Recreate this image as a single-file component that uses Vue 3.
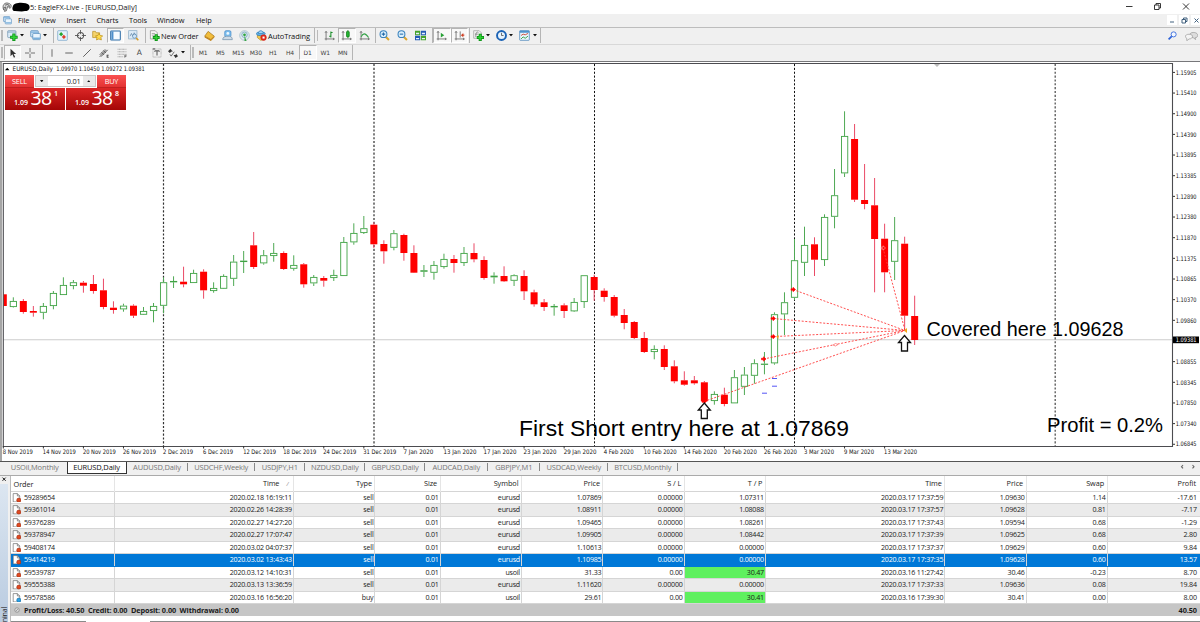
<template>
  <div class="terminal">
    <svg class="sprite">
      <symbol id="caret" viewBox="0 0 6 4"><path d="M0 0h6L3 4z" fill="#111" /></symbol>
      <symbol id="newchart" viewBox="0 0 16 16">
        <rect x="1" y="1" width="12" height="10" rx="1" fill="#dcecf8" stroke="#6c90ad" />
        <path d="M1 3h12" stroke="#6c90ad" />
        <path d="M10 5v11M4.500 10.500h11" stroke="#0a8f14" stroke-width="4.500" />
        <path d="M10 6v9M5.500 10.500h9" stroke="#2fd336" stroke-width="2.400" />
      </symbol>
      <symbol id="indicators" viewBox="0 0 16 16">
        <path d="M1 1h8l3 3v8H1z" fill="#f1f1f1" stroke="#999" /><path d="M4 10c0-9 3-7 4-6M3 6h4" fill="none" stroke="#666" />
        <path d="M10.500 5.500V16M5.500 11h10.500" stroke="#0a8f14" stroke-width="4.500" />
        <path d="M10.500 6.500V15M6.500 11h8.500" stroke="#2fd336" stroke-width="2.200" />
      </symbol>
      <symbol id="profiles" viewBox="0 0 16 16">
        <rect x="1" y="1" width="11" height="9" rx="1" fill="#d5e8f8" stroke="#4583b8" />
        <rect x="4" y="5" width="11" height="9" rx="1" fill="#eaf5fd" stroke="#4583b8" />
        <path d="M1.500 3h10M4.500 12h10" stroke="#7ab0dc" stroke-width="2" />
      </symbol>
      <symbol id="market" viewBox="0 0 16 16">
        <rect x="1" y="1" width="14" height="14" rx="1" fill="#e3f1fb" stroke="#6fa0c8" />
        <path d="M3 6l3-3 3 3-3 3z" fill="#26a52e" /><path d="M7 10l3-3 3 3-3 3z" fill="#e0402c" />
      </symbol>
      <symbol id="target" viewBox="0 0 16 16">
        <circle cx="8" cy="8" r="4.500" fill="none" stroke="#555" stroke-width="1.500" />
        <path d="M8 0v6M8 10v6M0 8h6M10 8h6" stroke="#555" stroke-width="1.300" />
      </symbol>
      <symbol id="folder" viewBox="0 0 16 16">
        <path d="M1 2h4l1 2h5v7H1z" fill="#f5d36c" stroke="#b58a1d" />
        <path d="M10 5l2 3 3.500.5-2.500 2.500.6 3.500L10 13l-3.500 1.500.7-3.500L5 8.500 8.500 8z" fill="#ffdb4d" stroke="#b98c10" />
      </symbol>
      <symbol id="window" viewBox="0 0 16 16">
        <rect x="1" y="1.500" width="14" height="13" rx="1" fill="#f6fbff" stroke="#2f6ea8" stroke-width="1.500" />
        <path d="M3.500 2v12" stroke="#4d8ecb" stroke-width="3" />
      </symbol>
      <symbol id="tester" viewBox="0 0 16 16">
        <rect x="1" y="1" width="12" height="12" fill="#dcebf7" stroke="#86a7c2" />
        <path d="M3 9l2-4 2 4 2-5 2 3" fill="none" stroke="#5a7fa0" />
        <circle cx="9.500" cy="9" r="3" fill="#cfe5f7" stroke="#5584ad" /><path d="M12 11.500l3 3.500" stroke="#d69b26" stroke-width="2.200" />
      </symbol>
      <symbol id="neworder" viewBox="0 0 16 16">
        <path d="M2 1h7l3 3v9H2z" fill="#f8f8f8" stroke="#888" /><path d="M4 5h5M4 7.500h5" stroke="#888" />
        <path d="M10.500 6v10M5.500 11h10" stroke="#0a8f14" stroke-width="4.400" />
        <path d="M10.500 7v8M6.500 11h8" stroke="#35cf38" stroke-width="2" />
      </symbol>
      <symbol id="gold" viewBox="0 0 16 16">
        <path d="M6 2l9 7-5 5-9-5z" fill="#f2bd3b" stroke="#a06d0c" /><path d="M1 9v2l9 5 5-5V9l-5 5z" fill="#c07f12" />
      </symbol>
      <symbol id="person" viewBox="0 0 16 16">
        <rect x="4" y="1" width="9" height="9" rx="2" fill="#7fc0f0" stroke="#3d85c4" />
        <circle cx="8.500" cy="5" r="2" fill="#eef8ff" />
        <path d="M1 14c0-4 3-4 5-5h5c2 1 4 1 4 5z" fill="#cfdbe6" stroke="#6f8ea8" />
      </symbol>
      <symbol id="signal" viewBox="0 0 16 16">
        <circle cx="8" cy="8" r="7" fill="#e0ebf0" stroke="#9ab6c5" /><circle cx="8" cy="7" r="4" fill="none" stroke="#6799b8" />
        <circle cx="8" cy="7" r="2" fill="#2fa642" /><path d="M8 8v8h3z" fill="#39a546" />
      </symbol>
      <symbol id="auto" viewBox="0 0 16 16">
        <path d="M2 7h10v6l-5 2-5-4z" fill="#f0c650" stroke="#b48a18" />
        <ellipse cx="7" cy="5.500" rx="6.500" ry="2.800" fill="#66b3e8" stroke="#2b78b3" /><path d="M3.500 5c0-5.500 7-5 7 0z" fill="#a5d9f8" stroke="#2b78b3" />
        <circle cx="11" cy="11" r="4.500" fill="#da281b" /><rect x="9.500" y="9.500" width="3" height="3" fill="#fff" />
      </symbol>
      <symbol id="bars" viewBox="0 0 16 16">
        <path d="M3 2v13M1 13h14M1.500 4L3 2l1.500 2M13 11.500l2 1.500-2 1.500" fill="none" stroke="#666" stroke-width="1.200" />
        <path d="M10 2v9M10 3.500h2.500M7.500 9H10" stroke="#188c28" stroke-width="1.500" />
      </symbol>
      <symbol id="candle" viewBox="0 0 16 16">
        <path d="M3 2v13M1 13h14M1.500 4L3 2l1.500 2M13 11.500l2 1.500-2 1.500" fill="none" stroke="#666" stroke-width="1.200" />
        <path d="M10 0v12" stroke="#08780c" /><rect x="8" y="2" width="4" height="8" rx="1" fill="#22b232" stroke="#08780c" />
      </symbol>
      <symbol id="line" viewBox="0 0 16 16">
        <path d="M3 2v13M1 13h14M1.500 4L3 2l1.500 2M13 11.500l2 1.500-2 1.500" fill="none" stroke="#666" stroke-width="1.200" />
        <path d="M3 10c3-6 6-6 11 1" fill="none" stroke="#35a348" stroke-width="1.500" />
      </symbol>
      <symbol id="zoomin" viewBox="0 0 16 16">
        <path d="M9 9l5.500 5.500" stroke="#dba62d" stroke-width="3" /><circle cx="6.500" cy="6" r="5" fill="#d9effc" stroke="#3982bd" stroke-width="1.500" />
        <path d="M4 6h5M6.500 3.500v5" stroke="#2269a8" stroke-width="1.500" />
      </symbol>
      <symbol id="zoomout" viewBox="0 0 16 16">
        <path d="M9 9l5.500 5.500" stroke="#dba62d" stroke-width="3" /><circle cx="6.500" cy="6" r="5" fill="#d9effc" stroke="#3982bd" stroke-width="1.500" />
        <path d="M4 6h5" stroke="#2269a8" stroke-width="1.500" />
      </symbol>
      <symbol id="tile" viewBox="0 0 16 16">
        <path d="M0 1h7.500v6.500H0zM8.500 8.500H16V15H8.500z" fill="#46a32b" /><path d="M8.500 1H16v6.500H8.500zM0 8.500h7.500V15H0z" fill="#245bb5" />
        <path d="M1.500 4h4.500v2H1.500zM10 4h4.500v2H10zM1.500 11.500h4.500v2H1.500zM10 11.500h4.500v2H10z" fill="#e8f3ff" />
      </symbol>
      <symbol id="scroll" viewBox="0 0 16 16">
        <path d="M3 2v13M1 13h14M1.500 4L3 2l1.500 2M13 11.500l2 1.500-2 1.500" fill="none" stroke="#666" stroke-width="1.200" />
        <path d="M7 4l5 3.500L7 11z" fill="#27a035" />
      </symbol>
      <symbol id="shift" viewBox="0 0 16 16">
        <path d="M3 2v13M1 13h14M1.500 4L3 2l1.500 2M13 11.500l2 1.500-2 1.500M9 2v9" fill="none" stroke="#666" stroke-width="1.200" />
        <path d="M10 7.500l3.500-3v2H15v2h-1.500v2z" fill="#cf4226" />
      </symbol>
      <symbol id="clock" viewBox="0 0 16 16">
        <circle cx="8" cy="8" r="6.500" fill="#e6f3fd" stroke="#1b62b5" stroke-width="2.800" /><path d="M8 4v4h3" fill="none" stroke="#555" stroke-width="1.200" />
      </symbol>
      <symbol id="template" viewBox="0 0 16 16">
        <rect x="1" y="1" width="14" height="14" rx="1" fill="#eaf5fd" stroke="#3b7bb3" /><path d="M1 2.500h14" stroke="#4e92cc" stroke-width="3" />
        <path d="M3 8l3-2 3 1 4-2" fill="none" stroke="#c74230" stroke-width="1.300" /><path d="M3 13l3-3 3 2 4-3" fill="none" stroke="#2a9d3b" stroke-width="1.300" />
      </symbol>
      <symbol id="cursor" viewBox="0 0 16 16"><path d="M4 1v12l3-3 2.500 5.500 2-1L9 9.500h4z" fill="#333" /></symbol>
      <symbol id="cross" viewBox="0 0 16 16"><path d="M8 0v6.500M8 9.500V16M0 8h6.500M9.500 8H16" stroke="#555" stroke-width="1.300" /><path d="M7.500 7.500h1v1h-1z" fill="#555" /></symbol>
      <symbol id="vline" viewBox="0 0 16 16"><path d="M8 2v12" stroke="#444" stroke-width="1.200" /></symbol>
      <symbol id="hline" viewBox="0 0 16 16"><path d="M2 8h12" stroke="#444" stroke-width="1.300" /></symbol>
      <symbol id="trend" viewBox="0 0 16 16"><path d="M2 14L14 2" stroke="#444" stroke-width="1.300" /></symbol>
      <symbol id="channel" viewBox="0 0 16 16">
        <path d="M1 11L10 2M3 14L14 3M1 14L12 3M4 7l4 4M7 4l4 4M13 11v4M12.500 11.500h3M12.500 13h2.500M12.500 15h3" fill="none" stroke="#444" stroke-width="1.200" />
      </symbol>
      <symbol id="fibo" viewBox="0 0 16 16">
        <path d="M1 2h14M1 6h14M1 10h14M1 14h9" stroke="#777" stroke-dasharray="1.500 .7" /><path d="M12.500 15.500v-4h3M12.500 13.500h2.500" fill="none" stroke="#444" />
      </symbol>
      <symbol id="label" viewBox="0 0 16 16">
        <rect x="1.500" y="1.500" width="13" height="13" fill="none" stroke="#777" stroke-dasharray="1 1" />
        <path d="M1 1.500h4M4.500 6V4.500h7V6M8 4.500V12" fill="none" stroke="#444" stroke-width="1.500" />
      </symbol>
      <symbol id="arrows" viewBox="0 0 16 16">
        <path d="M0 5l4-4 2 3 2 1-3 1-2 2zM9 11l3 0 1-2 3 4-4 3z" fill="#333" /><path d="M3 10l2 3 5-7" fill="none" stroke="#444" stroke-width="1.200" />
      </symbol>
      <symbol id="sellorder" viewBox="0 0 16 16">
        <path d="M2 1h7l4 4v10H2z" fill="#fff" stroke="#555" /><path d="M9 1v4h4" fill="none" stroke="#555" /><circle cx="11.500" cy="12" r="3.500" fill="#df4a22" stroke="#9f2b0e" />
      </symbol>
      <symbol id="buyorder" viewBox="0 0 16 16">
        <path d="M2 1h7l4 4v10H2z" fill="#fff" stroke="#555" /><path d="M9 1v4h4" fill="none" stroke="#555" /><circle cx="11.500" cy="12" r="3.500" fill="#2aa0e6" stroke="#15689c" />
      </symbol>
      <symbol id="search" viewBox="0 0 16 16"><path d="M1 15l6-6" stroke="#2c62d9" stroke-width="3" /><circle cx="10" cy="6" r="4.500" fill="#f4f8ff" stroke="#2c62d9" stroke-width="1.500" /></symbol>
      <symbol id="chat" viewBox="0 0 22 16">
        <path d="M14 2c10 0 9 9 3 9l1 3-4-3c-8 0-8-9 0-9z" fill="#ddd" stroke="#888" /><path d="M7 5c8 0 7 8 0 8l-4 3v-4C-1 10 0 5 7 5z" fill="#f4f4f4" stroke="#888" />
      </symbol>
    </svg>

    <header class="title">
      <svg class="logo" viewBox="0 0 16 16">
        <path d="M3 13C-1 5 5 0 10 2c5 1 6 5 3 8l-2-1 1-3-3 1-2 7-3 1 2-7-3 1z" fill="#ddd" stroke="#555" stroke-width="1.300" />
        <path d="M5 5l4-1 2 1" fill="none" stroke="#333" stroke-width="1.200" />
      </svg>
      <svg class="redact" viewBox="0 0 18 10"><path d="M1 4C2 0 14 0 17 3c2 4-1 6-4 6-3 1-7 0-10 0C0 9 0 6 1 4z" fill="#000" /></svg>
      <span class="title-text">5: EagleFX-Live - [EURUSD,Daily]</span>
      <svg class="win-buttons" viewBox="0 0 68 14">
        <path d="M1 6.500h6.500M29.500 5h4.500v4.500h-4.500zM31 5V3.500h4.500V8H34M58 3.500l6 6M64 3.500l-6 6" fill="none" stroke="#222" stroke-width=".9" />
      </svg>
    </header>

    <nav class="menu">
      <svg class="menu-icon"><use href="#profiles" /></svg>
      <span v-for="m in menus" :key="m.text" class="menu-item" :style="{ width: m.w + 'px' }">{{ m.text }}</span>
      <svg class="mdi-buttons" viewBox="0 0 34 12">
        <path d="M0 1h10v10H0zM12 1h10v10H12zM24 1h10v10H24z" fill="#fff" />
        <path d="M3 8h4M15 5.500h3.500V9H15zM16.500 5.500V4H20v3.500h-1.500M27.500 4.500l4 4M31.500 4.500l-4 4" fill="none" stroke="#41617f" stroke-width="1" />
      </svg>
    </nav>

    <div class="toolbar main-bar">
      <div v-for="(t, i) in tools" :key="i" class="tool" :class="t.type" :style="{ width: t.w + 'px' }">
        <svg v-if="t.icon" class="icon"><use :href="'#' + t.icon" /></svg>
        <span v-if="t.text" class="tool-text">{{ t.text }}</span>
        <svg v-if="t.type === 'drop'" class="caret"><use href="#caret" /></svg>
      </div>
      <svg class="search"><use href="#search" /></svg>
      <svg class="chat"><use href="#chat" /></svg>
    </div>

    <div class="toolbar line-bar">
      <div v-for="(t, i) in drawTools" :key="i" class="tool" :class="t.type" :style="{ width: t.w + 'px' }">
        <svg v-if="t.icon" class="icon small"><use :href="'#' + t.icon" /></svg>
        <span v-if="t.text" class="period" :class="{ letter: t.text === 'A' }">{{ t.text }}</span>
        <svg v-if="t.type === 'drop'" class="caret"><use href="#caret" /></svg>
      </div>
    </div>

    <main class="chart">
      <svg class="plot" viewBox="0 61 1200 400">
        <clipPath id="frame"><rect x="3.300" y="63" width="1169" height="383" /></clipPath>
        <rect x="0" y="61" width="1200" height="400" fill="#fff" />
        <path d="M0 61.500H1200" stroke="#77777a" stroke-width="1.200" />
        <path d="M1 61V461" stroke="#808080" stroke-width="1.400" />
        <path d="M3.300 339.700H1172" stroke="#ccc" stroke-width="1.100" />
        <path d="M934 64h6l-3 3z" fill="#bbb" />

        <line v-for="s in separators" :key="s.x" :x1="s.x" :x2="s.x" y1="64" y2="446" :stroke="s.color" :stroke-width="s.w" stroke-dasharray="2.100 1.750" />

        <g clip-path="url(#frame)">
          <g v-for="c in candles" :key="c.x">
            <line :x1="c.x" :x2="c.x" :y1="c.high" :y2="c.top" :stroke="c.wick" />
            <line :x1="c.x" :x2="c.x" :y1="c.bottom" :y2="c.low" :stroke="c.wick" />
            <rect v-if="c.up" :x="c.x - 3.1" :y="c.top + 0.4" width="6.300" :height="Math.max(c.bottom - c.top - 0.8, 0.3)" fill="#fff" stroke="#3fa344" stroke-width=".9" />
            <rect v-else :x="c.x - 3.5" :y="c.top" width="7" :height="c.bottom - c.top" fill="#f00" />
          </g>
        </g>
        <path d="M3.300 446.500V63.500H1172.500V446.500z" fill="none" stroke="#4c4c50" stroke-width="1.100" />

        <g stroke="#ff3b3b" stroke-width=".9" stroke-dasharray="2 1.600">
          <line v-for="d in deals" :key="d.y" :x1="d.x" :y1="d.y" x2="905" y2="330.500" />
        </g>
        <path v-for="d in deals" :key="'m' + d.y" :transform="`translate(${d.x} ${d.y})`" d="M-2-.8h2v-1.400L2.500 0 0 2.200V.8h-2z" :fill="d.hollow ? '#f00' : '#f00'" :stroke="d.hollow ? '#fbb' : '#f00'" stroke-width=".6" />
        <path d="M833 345l2.500-1.500 2.500 1-2.500 1.500z" fill="#fff" stroke="#f66" stroke-width=".7" />
        <path d="M907 328l-3 2.500 3 2.500zM778.500 335v4l-2-2z" fill="#f0a818" />
        <path d="M772 378.500h5M772 386.200h5M762 393.200h5" stroke="#5555f5" stroke-width="1" />
        <path v-for="a in arrows" :key="a.x" :transform="`translate(${a.x} ${a.y})`" d="M0 0l6 7H3v8.500h-6V7h-3z" fill="#fff" stroke="#111" stroke-width="1.300" />

        <g class="note">
          <text x="519" y="436.300" font-size="22.900" textLength="330">First Short entry here at 1.07869</text>
          <text x="926.500" y="336" font-size="19.800" textLength="197">Covered here 1.09628</text>
          <text x="1047" y="431.800" font-size="20.200" textLength="116">Profit = 0.2%</text>
        </g>

        <g class="scale">
          <g v-for="p in prices" :key="p.text">
            <path :d="`M1173 ${p.y}h2`" stroke="#333" />
            <text x="1175.800" :y="p.y + 2.2" textLength="20.700" lengthAdjust="spacingAndGlyphs">{{ p.text }}</text>
          </g>
          <rect x="1173" y="336.500" width="26" height="6.700" fill="#000" />
          <text class="inverse" x="1175.800" y="342" textLength="20.700" lengthAdjust="spacingAndGlyphs">1.09381</text>
          <g v-for="d in dates" :key="d.text">
            <path :d="`M${d.x + 0.5} 446v2.500`" stroke="#333" />
            <text :x="d.x" y="454.300" :textLength="d.len" lengthAdjust="spacingAndGlyphs">{{ d.text }}</text>
          </g>
          <path d="M5 70.200h4.500L7.200 67.700z" fill="#000" />
          <text x="12.500" y="71" textLength="40.500" lengthAdjust="spacingAndGlyphs">EURUSD,Daily</text>
          <text x="56.200" y="71" textLength="88.500" lengthAdjust="spacingAndGlyphs">1.09970 1.10450 1.09272 1.09381</text>
        </g>
      </svg>

      <section class="trade">
        <div class="trade-top">
          <span class="side">SELL</span>
          <div class="volume">
            <i class="spin"><svg class="caret"><use href="#caret" /></svg></i>
            <span class="lots">0.01</span>
            <i class="spin up"><svg class="caret"><use href="#caret" /></svg></i>
          </div>
          <span class="side">BUY</span>
        </div>
        <div class="trade-bottom">
          <div class="quote"><small>1.09</small><b>38</b><sup>1</sup></div>
          <div class="quote"><small>1.09</small><b>38</b><sup>8</sup></div>
        </div>
      </section>
    </main>

    <div class="tabs">
      <span v-for="t in tabs" :key="t.text" class="tab" :class="{ active: t.active, first: t.first }" :style="{ width: t.w + 'px' }">{{ t.text }}</span>
      <svg class="tab-nav" viewBox="0 0 20 10"><path d="M4 3L2.500 4.700 4 6.400M13.500 3L15 4.700l-1.500 1.700" fill="none" stroke="#666" stroke-width="1.100" /></svg>
    </div>

    <section class="history">
      <aside class="side-strip">
        <svg class="close" viewBox="0 0 10 10"><path d="M2.500 2l4 4M6.500 2l-4 4" stroke="#111" stroke-width="1.200" /></svg>
        <div class="strip"><span>Terminal</span></div>
      </aside>
      <div class="table">
        <div class="row head">
          <span v-for="(h, i) in headers" :key="i" class="cell">{{ h }}<em v-if="i === 1">/</em></span>
        </div>
        <div v-for="(r, n) in orders" :key="r[0]" class="row" :class="{ odd: n % 2, selected: n === 5 }">
          <span v-for="(v, i) in r" :key="i" class="cell" :class="{ hit: i === 7 && r[4] === 'usoil' }">
            <svg v-if="i === 0" class="order-icon"><use :href="r[2] === 'buy' ? '#buyorder' : '#sellorder'" /></svg>{{ v }}
          </span>
        </div>
        <div class="total">
          <svg class="dot" viewBox="0 0 8 8"><circle cx="4" cy="4" r="3" fill="#ddd" stroke="#888" /><path d="M2.500 5.500l3-3" stroke="#888" /></svg>
          <span class="balance">Profit/Loss: 40.50&nbsp; Credit: 0.00&nbsp; Deposit: 0.00&nbsp; Withdrawal: 0.00</span>
          <span class="sum">40.50</span>
        </div>
        <div class="bottom-edge"><i class="edge-left"></i><i class="edge-right"></i></div>
      </div>
    </section>
  </div>
</template>

<script setup>
const menus = [
  { text: 'File', w: 22 }, { text: 'View', w: 26.5 }, { text: 'Insert', w: 30 }, { text: 'Charts', w: 32.5 },
  { text: 'Tools', w: 28 }, { text: 'Window', w: 39 }, { text: 'Help', w: 30 }
]

const tools = [
  { type: 'grip', w: 4 },
  { type: 'drop', icon: 'newchart', w: 23 },
  { type: 'drop', icon: 'profiles', w: 23 },
  { type: 'sep', w: 3.5 },
  { icon: 'market', w: 18 },
  { icon: 'target', w: 17.5 },
  { icon: 'folder', w: 17.5 },
  { type: 'pressed', icon: 'window', w: 17.5 },
  { icon: 'tester', w: 18 },
  { type: 'sep', w: 4 },
  { type: 'wide', icon: 'neworder', text: 'New Order', w: 55 },
  { icon: 'gold', w: 17.5 },
  { icon: 'person', w: 17.5 },
  { icon: 'signal', w: 17 },
  { type: 'wide', icon: 'auto', text: 'AutoTrading', w: 61 },
  { type: 'sep', w: 1 },
  { type: 'grip', w: 5 },
  { icon: 'bars', w: 18 },
  { type: 'pressed', icon: 'candle', w: 17.5 },
  { icon: 'line', w: 18 },
  { type: 'sep', w: 2 },
  { icon: 'zoomin', w: 18 },
  { icon: 'zoomout', w: 17.5 },
  { icon: 'tile', w: 18 },
  { type: 'sep', w: 4 },
  { type: 'pressed', icon: 'scroll', w: 17.5 },
  { type: 'pressed', icon: 'shift', w: 17.5 },
  { type: 'sep', w: 2 },
  { type: 'drop first-drop', icon: 'indicators', w: 23 },
  { type: 'drop', icon: 'clock', w: 23.5 },
  { type: 'drop', icon: 'template', w: 22.5 },
  { type: 'sep', w: 2 }
].map(t => (t.type === 'drop first-drop' ? { ...t, type: 'drop' } : t))

const drawTools = [
  { type: 'grip', w: 4 },
  { type: 'pressed', icon: 'cursor', w: 17 },
  { icon: 'cross', w: 18 },
  { type: 'sep', w: 3.5 },
  { icon: 'vline', w: 18 },
  { icon: 'hline', w: 17.5 },
  { icon: 'trend', w: 17.5 },
  { icon: 'channel', w: 17.5 },
  { icon: 'fibo', w: 17.5 },
  { text: 'A', w: 17.5 },
  { icon: 'label', w: 17.5 },
  { type: 'drop', icon: 'arrows', w: 23.5 },
  { type: 'sep', w: 2 },
  { type: 'grip', w: 4 },
  { text: 'M1', w: 16 },
  { text: 'M5', w: 18.5 },
  { text: 'M15', w: 17.5 },
  { text: 'M30', w: 17.5 },
  { text: 'H1', w: 17 },
  { text: 'H4', w: 17 },
  { type: 'pressed', text: 'D1', w: 18 },
  { text: 'W1', w: 17.5 },
  { text: 'MN', w: 17.5 },
  { type: 'sep', w: 1 }
]

const separators = [
  { x: 163.5, color: '#333', w: 1.2 },
  { x: 374, color: '#808080', w: 2 },
  { x: 594.5, color: '#111', w: 1 },
  { x: 794.5, color: '#111', w: 1 },
  { x: 1055.2, color: '#555', w: 1.3 }
]

// [up, high, top, bottom, low]
const raw = [
  [0, 291.7, 294.3, 306, 307.3], [1, 297.3, 301, 307, 307.5], [0, 299, 301, 312, 313.7], [0, 306, 311, 312.7, 316.7],
  [1, 303, 306, 312.7, 319.3], [1, 291, 293, 306, 309.3], [1, 277.3, 285, 295, 295], [1, 280, 282.3, 286, 289.3],
  [0, 281, 282.7, 285.7, 292.7], [0, 275, 284, 291, 293.7], [0, 278.7, 290.3, 307, 309.3], [0, 301.3, 307.7, 310, 313.7],
  [1, 303.7, 305.7, 309.3, 311.7], [0, 304.3, 305.7, 315.7, 318], [1, 307, 311, 314.7, 315], [1, 303, 306, 311, 322.3],
  [1, 277.3, 282.3, 305.7, 313.3], [1, 276.3, 281, 282.3, 288], [0, 266.7, 281.7, 284.3, 287.3], [1, 269.7, 273, 283, 283],
  [0, 269.3, 271.7, 290.3, 298.7], [1, 282.3, 288, 291, 292.7], [1, 274.3, 276, 288.7, 289], [1, 255, 261.7, 278.7, 286],
  [1, 251, 260.7, 262, 273], [0, 232, 245.3, 267, 269], [1, 250, 255.3, 263.3, 264.7], [1, 243, 253, 256, 261.7],
  [0, 251.3, 253, 269, 270], [1, 255.3, 265, 268.7, 270.7], [0, 263, 264.3, 284.3, 287.7], [1, 275, 277, 283.3, 286],
  [0, 276, 278, 280.7, 286.7], [1, 269.7, 275, 278, 281], [1, 237, 242, 276, 276], [1, 223.3, 233, 242.3, 244.7],
  [1, 216, 228.3, 233, 234], [0, 222.3, 224.7, 244.3, 248], [0, 240.3, 244, 251.3, 263.7], [1, 230, 233.3, 247.7, 250.3],
  [0, 233.7, 235, 253, 260.7], [0, 245.3, 253, 272.7, 273], [1, 265, 270.3, 271.7, 277], [1, 261, 265, 272.7, 279.7],
  [1, 253.7, 259, 267, 268.7], [0, 255, 259, 263, 272.7], [1, 247, 253, 263, 266], [0, 243.3, 253, 259.3, 262.3],
  [0, 256.3, 260, 278, 279.7], [1, 272.3, 275.7, 277.3, 283.7], [0, 266.3, 276, 281.3, 282], [1, 274.3, 275.3, 280.7, 286],
  [0, 270.3, 276, 291.3, 300], [0, 289.7, 292.3, 304.3, 306.7], [0, 299, 302.3, 307, 311], [1, 304, 306, 307.3, 315.7],
  [0, 303.3, 305.3, 311, 318], [1, 298, 302, 311.3, 312], [1, 275.3, 275.3, 302, 308], [0, 274.7, 277, 290, 300.7],
  [0, 288.3, 290.7, 297, 301.7], [0, 295, 297, 315.7, 317.3], [0, 309, 315, 323, 329.3], [0, 321, 322, 338, 339],
  [0, 332, 338, 352, 353], [1, 345.3, 349, 352, 359.3], [0, 345.3, 349, 367, 370], [0, 360.3, 366.3, 381.3, 383.3],
  [0, 371.3, 380.3, 384.7, 385.7], [0, 376, 380.3, 383.3, 384.7], [0, 381, 382.3, 401.3, 402], [1, 391.3, 394, 401, 404.7],
  [0, 387.7, 394.7, 404, 406.3], [1, 370, 377.3, 403.3, 403.3], [1, 367, 374.7, 386.7, 395], [1, 359.3, 363.3, 375.7, 383.7],
  [1, 352, 363.7, 364.7, 374.3], [1, 312.3, 314.3, 363.3, 364.7], [1, 292.3, 302.3, 314.3, 335], [1, 239, 260.3, 297.7, 300],
  [1, 226.7, 245, 262.7, 276], [0, 237.3, 244.3, 259.7, 276], [1, 214.3, 217, 260, 266], [1, 169, 195.3, 216.7, 228.3],
  [1, 111.3, 136, 173.3, 177], [0, 124, 139, 199.7, 202], [0, 164, 200, 204, 209.3], [0, 178, 205.3, 239, 292.3],
  [0, 223.7, 238.7, 272.3, 292.3], [1, 217, 240.3, 261.7, 280], [0, 236.7, 243.7, 315.7, 330], [0, 295.7, 316, 340, 345]
]
const candles = raw.map(([up, high, top, bottom, low], i) => ({
  x: 3.3 + i * 10.015,
  up,
  high,
  top,
  bottom,
  low,
  wick: up ? '#4fa954' : '#ea4a66'
}))

const deals = [
  { x: 793, y: 289.5 }, { x: 773, y: 318.5 }, { x: 773, y: 336.6 },
  { x: 763.5, y: 359 }, { x: 704, y: 401.5 }, { x: 883, y: 248, hollow: true }
]
const arrows = [{ x: 704.3, y: 403 }, { x: 904.5, y: 335.5 }]

const prices = [
  '1.15905', '1.15410', '1.14900', '1.14390', '1.13895', '1.13385', '1.12890', '1.12380', '1.11870', '1.11375',
  '1.10865', '1.10370', '1.09860', '', '1.08855', '1.08345', '1.07850', '1.07340', '1.06845'
].map((text, i) => ({ text, y: 72.4 + i * 20.66 })).filter(p => p.text)

const dates = [
  '8 Nov 2019', '14 Nov 2019', '20 Nov 2019', '26 Nov 2019', '2 Dec 2019', '6 Dec 2019', '12 Dec 2019', '18 Dec 2019',
  '24 Dec 2019', '31 Dec 2019', '7 Jan 2020', '13 Jan 2020', '17 Jan 2020', '23 Jan 2020', '29 Jan 2020', '4 Feb 2020',
  '10 Feb 2020', '14 Feb 2020', '20 Feb 2020', '26 Feb 2020', '3 Mar 2020', '9 Mar 2020', '13 Mar 2020'
].map((text, i) => ({ text, x: 2.8 + i * 40.06, len: text.length > 10 ? 33 : 30 }))

const tabs = [
  { text: 'USOil,Monthly', w: 66.5, first: true }, { text: 'EURUSD,Daily', w: 60, active: true }, { text: 'AUDUSD,Daily', w: 61 },
  { text: 'USDCHF,Weekly', w: 67.5 }, { text: 'USDJPY,H1', w: 49.5 }, { text: 'NZDUSD,Daily', w: 60.5 },
  { text: 'GBPUSD,Daily', w: 60 }, { text: 'AUDCAD,Daily', w: 62.5 }, { text: 'GBPJPY,M1', w: 52.5 },
  { text: 'USDCAD,Weekly', w: 67.5 }, { text: 'BTCUSD,Monthly', w: 70.5 }
]

const headers = ['Order', 'Time', 'Type', 'Size', 'Symbol', 'Price', 'S / L', 'T / P', 'Time', 'Price', 'Swap', 'Profit']
const orders = [
  ['59289654', '2020.02.18 16:19:11', 'sell', '0.01', 'eurusd', '1.07869', '0.00000', '1.07311', '2020.03.17 17:37:59', '1.09630', '1.14', '-17.61'],
  ['59361014', '2020.02.26 14:28:39', 'sell', '0.01', 'eurusd', '1.08911', '0.00000', '1.08088', '2020.03.17 17:37:57', '1.09628', '0.81', '-7.17'],
  ['59376289', '2020.02.27 14:27:20', 'sell', '0.01', 'eurusd', '1.09465', '0.00000', '1.08261', '2020.03.17 17:37:43', '1.09594', '0.68', '-1.29'],
  ['59378947', '2020.02.27 17:07:47', 'sell', '0.01', 'eurusd', '1.09905', '0.00000', '1.08442', '2020.03.17 17:37:39', '1.09625', '0.68', '2.80'],
  ['59408174', '2020.03.02 04:07:37', 'sell', '0.01', 'eurusd', '1.10613', '0.00000', '0.00000', '2020.03.17 17:37:37', '1.09629', '0.60', '9.84'],
  ['59414219', '2020.03.02 13:43:43', 'sell', '0.01', 'eurusd', '1.10985', '0.00000', '0.00000', '2020.03.17 17:37:35', '1.09628', '0.60', '13.57'],
  ['59539787', '2020.03.12 14:10:31', 'sell', '0.01', 'usoil', '31.33', '0.00', '30.47', '2020.03.16 11:27:42', '30.46', '-0.23', '8.70'],
  ['59555388', '2020.03.13 13:36:59', 'sell', '0.01', 'eurusd', '1.11620', '0.00000', '0.00000', '2020.03.17 17:37:33', '1.09636', '0.08', '19.84'],
  ['59578586', '2020.03.16 16:56:20', 'buy', '0.01', 'usoil', '29.61', '0.00', '30.41', '2020.03.16 17:39:30', '30.41', '0.00', '8.00']
]
</script>

<style>
body {
  background: #fff;
  overflow: hidden;
}
</style>

<style scoped>
.terminal {
  display: flex;
  flex-direction: column;
  width: 1200px;
  height: 622px;
  overflow: hidden;
  background: #f0f0f0;
  color: #1a1a1a;
  font-family: "Open Sans", "Noto Sans", sans-serif;
  font-size: 7.1px;
  letter-spacing: -0.2px;
  white-space: nowrap;
}

.sprite {
  display: block;
  width: 0;
  height: 0;
}

.title {
  display: flex;
  align-items: center;
  height: 14px;
  padding-left: 2px;
  background: #fff;
}

.logo {
  width: 10px;
  height: 10px;
}

.redact {
  width: 18px;
  height: 10px;
}

.title-text {
  font-size: 7.5px;
  letter-spacing: -0.12px;
}

.win-buttons {
  width: 68px;
  height: 14px;
  margin-left: auto;
  margin-right: 7px;
}

.menu {
  display: flex;
  align-items: center;
  box-sizing: border-box;
  height: 13.5px;
  padding-left: 3px;
  border-bottom: 1px solid #bdbdbd;
  font-size: 7.4px;
  letter-spacing: -0.1px;
}

.menu-icon {
  width: 9px;
  height: 9px;
  margin-right: 6px;
}

.menu-item {
  color: #111;
}

.mdi-buttons {
  width: 34px;
  height: 12px;
  margin-left: auto;
  margin-right: -1px;
}

.toolbar {
  display: flex;
  align-items: center;
  box-sizing: border-box;
}

.main-bar {
  height: 17px;
  border-bottom: 1px solid #d8d8d8;
}

.line-bar {
  height: 16.5px;
}

.tool {
  display: flex;
  flex: none;
  align-items: center;
  justify-content: center;
  box-sizing: border-box;
  height: 15px;
}

.tool.drop,
.tool.wide {
  justify-content: flex-start;
  padding-left: 2.5px;
}

.tool.drop {
  gap: 2.5px;
}

.tool.wide {
  gap: 1.5px;
}

.tool.sep {
  border-right: 1px solid #b5b5b5;
}

.tool.grip::before {
  content: '';
  width: 1.5px;
  height: 11px;
  background: #bababa;
}

.tool.pressed {
  border: 1px solid #d0d0d0;
  border-color: #b4b4b4 #fff #fff #b4b4b4;
  background: #f8f8f8;
}

.icon {
  flex: none;
  width: 11px;
  height: 11px;
}

.icon.small {
  width: 10px;
  height: 10px;
}

.caret {
  flex: none;
  width: 4px;
  height: 2.6px;
}

.tool-text {
  color: #111;
  font-size: 7.5px;
  letter-spacing: -0.1px;
}

.period {
  color: #444;
  font-family: "DejaVu Sans", sans-serif;
  font-size: 6px;
}

.period.letter {
  font-size: 7.5px;
}

.search {
  width: 9px;
  height: 9px;
  margin-left: auto;
  margin-right: 8px;
}

.chat {
  width: 13px;
  height: 10px;
  margin-right: 2px;
}

.chart {
  position: relative;
  height: 400px;
}

.plot {
  display: block;
  width: 1200px;
  height: 400px;
  letter-spacing: 0;
}

.note {
  font-family: "Liberation Sans", Arial, sans-serif;
  fill: #000;
}

.scale {
  font-family: "DejaVu Sans Condensed", "DejaVu Sans", sans-serif;
  font-size: 6.2px;
  fill: #111;
}

.inverse {
  fill: #fff;
}

.trade {
  position: absolute;
  top: 14px;
  left: 5px;
  width: 121px;
  height: 34.5px;
  color: #fff;
}

.trade-top {
  display: flex;
  gap: 1px;
  height: 13px;
}

.side {
  width: 29px;
  box-sizing: border-box;
  border-bottom: 1px solid #c02020;
  background: linear-gradient(#fa5050, #e33232);
  font-size: 7.3px;
  line-height: 13px;
  text-align: center;
}

.volume {
  display: flex;
  flex: 1;
  box-sizing: border-box;
  height: 12px;
  border: 1px solid #c8c8c8;
  background: #fff;
}

.spin {
  display: flex;
  align-items: center;
  justify-content: center;
  width: 12px;
  background: #e9e9e9;
}

.spin .caret {
  width: 3.5px;
  height: 2.3px;
}

.spin.up .caret {
  transform: rotate(180deg);
}

.lots {
  flex: 1;
  padding-right: 2.5px;
  color: #222;
  font-size: 7.4px;
  line-height: 10px;
  text-align: right;
}

.trade-bottom {
  display: flex;
  gap: 1px;
}

.quote {
  display: flex;
  flex: 1;
  box-sizing: border-box;
  height: 21.5px;
  padding-left: 9px;
  gap: 2.5px;
  background: linear-gradient(#dc2626, #a50606);
  letter-spacing: 0;
}

.quote small {
  margin-top: 9px;
  font-size: 7px;
  font-weight: 600;
  line-height: 12px;
}

.quote b {
  font-size: 19.5px;
  font-weight: 400;
  line-height: 20.5px;
  letter-spacing: -0.6px;
}

.quote sup {
  font-size: 7px;
  font-weight: 600;
  line-height: 11px;
}

.tabs {
  display: flex;
  box-sizing: border-box;
  height: 15px;
  border-top: 1px solid #555;
  border-bottom: 1px solid #aaa;
  color: #777;
  font-size: 7.5px;
  letter-spacing: -0.16px;
}

.tab {
  position: relative;
  flex: none;
  box-sizing: border-box;
  height: 11.5px;
  line-height: 10.5px;
  text-align: center;
}

.tab::after {
  content: '';
  position: absolute;
  top: 1px;
  right: 0;
  width: 1px;
  height: 8px;
  background: #888;
}

.tab.first {
  padding-left: 3px;
}

.tab.active {
  border: 1px solid #333;
  border-top: 0;
  background: #fff;
  color: #111;
}

.tab.active::after,
.tab.first::after {
  display: none;
}

.tab-nav {
  width: 20px;
  height: 10px;
  margin-left: auto;
  margin-right: 1px;
}

.history {
  display: flex;
  flex: 1;
}

.side-strip {
  display: flex;
  flex: none;
  flex-direction: column;
  width: 10px;
  height: 146px;
}

.close {
  width: 9px;
  height: 8px;
}

.strip {
  display: flex;
  flex: 1;
  align-items: flex-start;
  width: 8px;
  overflow: hidden;
  background: linear-gradient(#dce6f1, #b9cbe0);
}

.strip span {
  margin-top: 123px;
  color: #222;
  line-height: 8px;
  writing-mode: vertical-rl;
  transform: rotate(180deg);
}

.table {
  flex: 1;
  background: #fff;
  border-left: 1px solid #bbb;
  box-sizing: border-box;
}

.row {
  display: grid;
  grid-template-columns: 104.3px 178.7px 81.5px 65.2px 81.3px 81.5px 81.2px 81.3px 179.3px 81.4px 81px 92.3px;
  box-sizing: border-box;
  height: 12.5px;
  border-bottom: 1px solid #d5d5d5;
  line-height: 11.5px;
}

.row.head {
  height: 15.5px;
  line-height: 15px;
}

.row.odd {
  background: #ebebeb;
}

.row.selected {
  border-color: #0078d7;
  background: #0078d7;
  color: #fff;
}

.cell {
  box-sizing: border-box;
  padding-right: 1px;
  border-right: 1px solid #d5d5d5;
  text-align: right;
}

.cell:first-child {
  display: flex;
  align-items: center;
  gap: 3px;
  padding-left: 0.5px;
  text-align: left;
}

.cell:last-child {
  padding-right: 3.2px;
  border-right: 0;
}

.head .cell {
  padding-right: 2.5px;
  border-color: #e5e5e5;
  font-size: 7.3px;
  letter-spacing: -0.05px;
}

.head .cell:first-child {
  padding-left: 2.5px;
}

.head .cell:last-child {
  padding-right: 4px;
}

.cell em {
  margin-left: 7px;
  margin-right: 2px;
  color: #888;
  font-size: 6px;
}

.cell.hit {
  background: #5ff05f;
}

.order-icon {
  width: 9.5px;
  height: 9.5px;
}

.total {
  display: flex;
  align-items: center;
  height: 12px;
  padding-left: 3px;
  background: #c6c6c6;
  font-size: 7.3px;
  font-weight: 700;
  letter-spacing: -0.11px;
}

.dot {
  width: 6px;
  height: 6px;
  margin-right: 4px;
}

.sum {
  margin-left: auto;
  padding-right: 3.2px;
}

.bottom-edge {
  display: flex;
  justify-content: space-between;
  align-items: flex-end;
  height: 6px;
}

.edge-left,
.edge-right {
  width: 75px;
  height: 1.5px;
  background: #8a8a8a;
}

.edge-right {
  width: 1050px;
}
</style>
